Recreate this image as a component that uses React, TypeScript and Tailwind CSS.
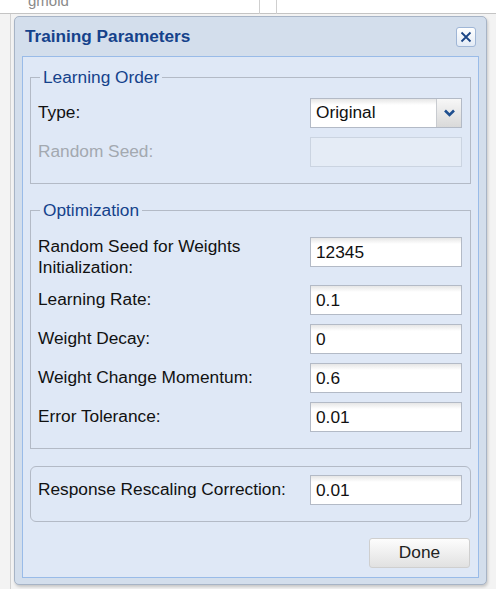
import React from 'react';

type Field = {
    label: string;
    value: string;
};

const optimization: Field[] = [
    { label: 'Learning Rate:', value: '0.1' },
    { label: 'Weight Decay:', value: '0' },
    { label: 'Weight Change Momentum:', value: '0.6' },
    { label: 'Error Tolerance:', value: '0.01' },
];

function TextField({ value, disabled }: { value: string; disabled?: boolean }) {
    return (
        <input
            readOnly
            disabled={disabled}
            defaultValue={value}
            className={
                disabled
                    ? 'w-[152px] h-[30px] shrink-0 border border-[#cbd4e1] bg-[#e5ecf6] px-[5px] text-[17.3px] outline-none'
                    : 'w-[152px] h-[30px] shrink-0 border border-[#b3bac6] bg-[linear-gradient(#e6e6e6,#ffffff_6px)] px-[5px] text-[17.3px] text-[#111] outline-none'
            }
        />
    );
}

function Select({ value }: { value: string }) {
    return (
        <div className="w-[152px] h-[30px] shrink-0 flex border border-[#b3bac6] bg-[linear-gradient(#e6e6e6,#ffffff_6px)]">
            <span className="flex-1 flex items-center px-[5px] text-[17.3px] text-[#111]">{value}</span>
            <span className="w-[25px] flex items-center justify-center border-l border-[#c8cbd0] bg-[linear-gradient(#f7f7f7,#d9d9d9)]">
                <svg width="11" height="8" viewBox="0 0 11 8">
                    <path d="M1 1.5 L5.5 6 L10 1.5" fill="none" stroke="#1f4f8f" strokeWidth="2.6" />
                </svg>
            </span>
        </div>
    );
}

export default function App() {
    return (
        <div className="relative w-[496px] h-[589px] overflow-hidden bg-[#f3f3f3] font-['Liberation_Sans',Arial,sans-serif]">
            {/* app behind the dialog */}
            <div className="absolute inset-x-0 top-0 h-[14px] bg-white border-b border-[#c4c4c4]">
                <span className="absolute left-[28px] top-[-8px] text-[15px] leading-[18px] text-[#8a8a8a]">gmoid</span>
                <span className="absolute left-[259px] top-0 h-[14px] border-l border-[#cfcfcf]" />
                <span className="absolute left-[276px] top-0 h-[14px] border-l border-[#cfcfcf]" />
            </div>
            <div className="absolute left-[10px] top-[14px] bottom-0 border-l border-[#d2d2d2]" />

            {/* dialog */}
            <div className="absolute left-[14px] top-[16px] w-[473px] h-[569px] flex flex-col rounded-[5px] border border-[#a7b4c6] bg-[#d3deec] px-[7px] pb-[6px] shadow-[1px_2px_3px_rgba(0,0,0,0.18)]">
                <div className="h-[39px] shrink-0 flex items-center justify-between pl-[3px] pr-[3px]">
                    <h1 className="text-[17.2px] font-bold text-[#15428b]">Training Parameters</h1>
                    <button className="w-[20px] h-[20px] flex items-center justify-center rounded-[3px] border border-[#9fb6d6] bg-[linear-gradient(#ffffff,#e3ebf6)]">
                        <svg width="12" height="12" viewBox="0 0 12 12">
                            <path d="M1.5 1.5 L10.5 10.5 M10.5 1.5 L1.5 10.5" stroke="#1b4585" strokeWidth="1.8" />
                        </svg>
                    </button>
                </div>

                <div className="flex-1 flex flex-col border border-[#99bbe8] bg-[#dfe8f6] px-[7px] pt-[10px] pb-[9px]">
                    <fieldset className="border border-[#b3bac6] pl-[7px] pr-[8px] pt-[11px] pb-[16px]">
                        <legend className="ml-[2px] px-[3px] text-[17.3px] leading-[20px] text-[#15428b]">Learning Order</legend>
                        <div className="flex flex-col gap-[9px]">
                            <div className="h-[30px] flex items-center justify-between">
                                <span className="text-[17.3px] text-[#111]">Type:</span>
                                <Select value="Original" />
                            </div>
                            <div className="h-[30px] flex items-center justify-between">
                                <span className="text-[17.3px] text-[#a3a9b0]">Random Seed:</span>
                                <TextField value="" disabled />
                            </div>
                        </div>
                    </fieldset>

                    <fieldset className="mt-[16px] border border-[#b3bac6] pl-[7px] pr-[8px] pt-[16px] pb-[16px]">
                        <legend className="ml-[2px] px-[3px] text-[17.3px] leading-[20px] text-[#15428b]">Optimization</legend>
                        <div className="flex flex-col gap-[9px]">
                            <div className="h-[40px] flex items-start justify-between">
                                <span className="text-[17.3px] leading-[21px] text-[#111]">
                                    Random Seed for Weights
                                    <br />
                                    Initialization:
                                </span>
                                <div className="pt-[1px]">
                                    <TextField value="12345" />
                                </div>
                            </div>
                            {optimization.map((f) => (
                                <div key={f.label} className="h-[30px] flex items-center justify-between">
                                    <span className="text-[17.3px] text-[#111]">{f.label}</span>
                                    <TextField value={f.value} />
                                </div>
                            ))}
                        </div>
                    </fieldset>

                    <fieldset className="mt-[17px] rounded-[6px] border border-[#b3bac6] pl-[7px] pr-[8px] pt-[8px] pb-[16px]">
                        <div className="h-[30px] flex items-center justify-between">
                            <span className="text-[17.3px] text-[#111]">Response Rescaling Correction:</span>
                            <TextField value="0.01" />
                        </div>
                    </fieldset>

                    <div className="mt-[16px] flex justify-end pr-[1px]">
                        <button className="w-[101px] h-[30px] rounded-[3px] border border-[#cfcfcf] bg-[linear-gradient(#fdfdfd,#e1e1e1)] text-[17.3px] text-[#222]">
                            Done
                        </button>
                    </div>
                </div>
            </div>
        </div>
    );
}
